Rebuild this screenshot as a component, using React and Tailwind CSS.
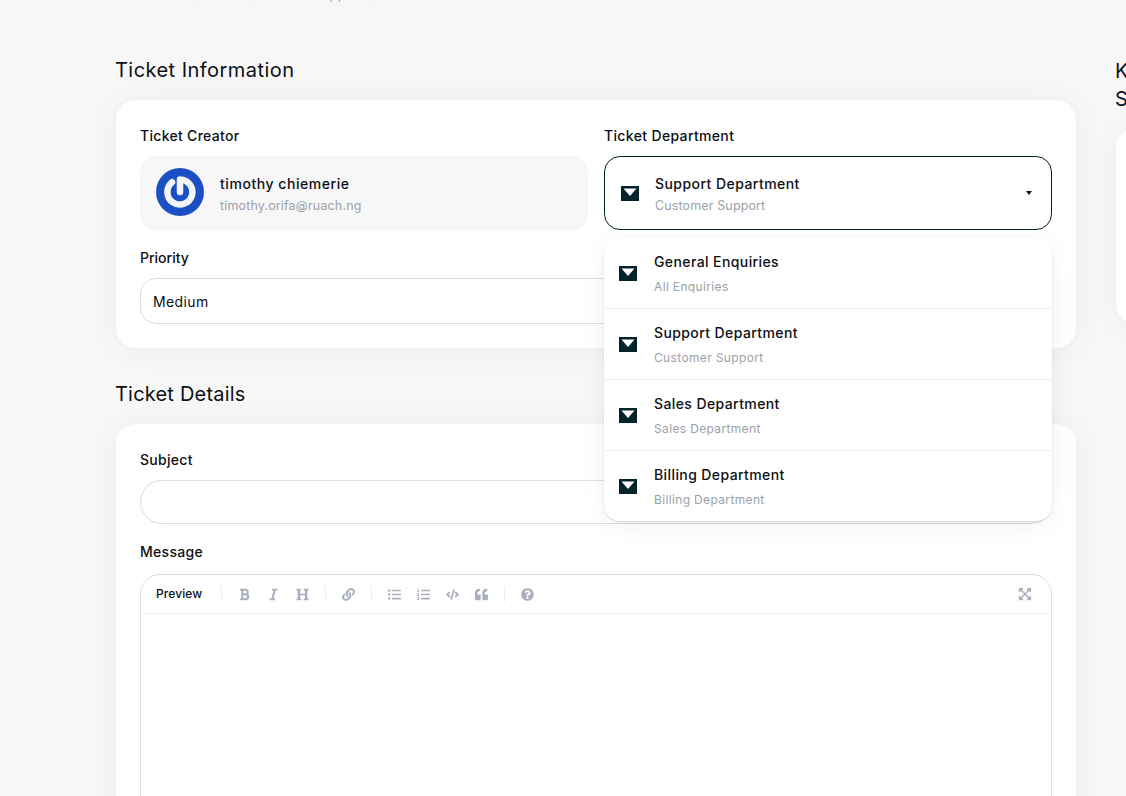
import React from "react";
import {
  FaBold,
  FaItalic,
  FaHeading,
  FaLink,
  FaListUl,
  FaListOl,
  FaCode,
  FaQuoteLeft,
  FaQuestionCircle,
  FaExpandArrowsAlt,
} from "react-icons/fa";

const departments = [
  { name: "General Enquiries", note: "All Enquiries" },
  { name: "Support Department", note: "Customer Support" },
  { name: "Sales Department", note: "Sales Department" },
  { name: "Billing Department", note: "Billing Department" },
];

const Envelope = () => (
  <svg width="18" height="15" viewBox="0 0 18 15" className="shrink-0">
    <rect width="18" height="15" fill="#04232b" />
    <path d="M2.5 2.5h13L9 10z" fill="#fff" />
  </svg>
);

const Logo = () => (
  <svg width="48" height="48" viewBox="0 0 48 48" className="shrink-0 mb-[2px]">
    <circle cx="24" cy="24" r="24" fill="#1c4fc4" />
    <path
      d="M16 14.3A12.5 12.5 0 1 0 24 11.5V24"
      fill="none"
      stroke="#f2f4f8"
      strokeWidth="6.5"
      strokeLinecap="round"
      strokeLinejoin="round"
    />
  </svg>
);

const Tool = ({ icon: Icon, size = 13 }) => (
  <span className="w-[29px] flex justify-center text-[#a9afbc]">
    <Icon size={size} />
  </span>
);

const Divider = () => <span className="w-px h-4 bg-[#eeeeee] mx-2"></span>;

const App = () => {
  return (
    <div className="h-[796px] overflow-hidden bg-[#f7f7f7] text-[#0d0f14] font-['Inter','Liberation_Sans',sans-serif] relative">
      <div className="h-[4px] overflow-hidden relative">
        <div className="absolute bottom-0 left-[116px] flex text-sm text-[#9b9fa8] whitespace-nowrap">
          <span className="w-[85px]">Dashboard /</span>
          <span className="w-[89px]">Tickets /</span>
          <span className="w-[115px] pl-[22px]">Support /</span>
          <span>New Ticket</span>
        </div>
      </div>

      <div className="flex gap-10 pl-[116px] pt-[53px]">
        <main className="w-[960px] shrink-0">
          <h2 className="text-[20px] leading-[26px] h-[43px] -ml-px tracking-[0.45px]">Ticket Information</h2>

          <section className="bg-white rounded-[20px] shadow-[0_2px_30px_rgba(0,0,0,0.05)] px-6 pt-6 h-[248px] relative">
            <div className="grid grid-cols-2 gap-4">
              <div>
                <label className="block text-[14px] leading-6 font-medium tracking-[0.3px]">Ticket Creator</label>
                <div className="mt-2 h-[74px] rounded-[16px] bg-[#f7f7f7] flex items-center gap-4 px-4">
                  <Logo />
                  <div className="pt-[4px]">
                    <p className="text-[14px] leading-5 font-medium tracking-[0.55px]">timothy chiemerie</p>
                    <p className="text-[12.5px] leading-5 mt-[2px] text-[#9b9fa8] tracking-[0.15px]">timothy.orifa@ruach.ng</p>
                  </div>
                </div>
              </div>

              <div>
                <label className="block text-[14px] leading-6 font-medium tracking-[0.35px]">Ticket Department</label>
                <div className="mt-2 h-[74px] rounded-[16px] border border-[#04232b] flex items-center px-4">
                  <Envelope />
                  <div className="ml-4 flex-1 pt-[4px]">
                    <p className="text-[14px] leading-5 font-medium tracking-[0.45px]">Support Department</p>
                    <p className="text-[12.5px] leading-5 mt-[2px] text-[#9b9fa8] tracking-[0.13px]">Customer Support</p>
                  </div>
                  <span className="w-0 h-0 border-x-[3.5px] border-x-transparent border-t-[4px] border-t-[#0d0f14] mr-[3px]"></span>
                </div>
              </div>
            </div>

            <label className="block text-[14px] leading-6 font-medium mt-4">Priority</label>
            <div className="mt-2 h-[46px] rounded-[16px] border border-[#dddddd] flex items-center px-3 text-[14px] tracking-[0.4px]">
              Medium
            </div>

            <div className="absolute left-[488px] top-[138px] w-[448px] h-[283px] z-10 bg-white rounded-[16px] shadow-[0_1px_2px_rgba(0,0,0,0.12),0_4px_24px_rgba(0,0,0,0.06)] overflow-hidden">
              {departments.map((dept, i) => (
                <div
                  key={dept.name}
                  className={`flex items-center pl-[15px] ${i < 3 ? "h-[71px] border-b border-[#eeeeee]" : "h-[70px]"}`}
                >
                  <Envelope />
                  <div className="ml-[17px]">
                    <p className="text-[14px] leading-5 font-medium tracking-[0.4px]">{dept.name}</p>
                    <p className="text-[12px] leading-4 mt-[7px] text-[#9b9fa8] tracking-[0.35px]">{dept.note}</p>
                  </div>
                </div>
              ))}
            </div>
          </section>

          <h2 className="text-[20px] leading-[26px] h-[63px] pt-[33px] box-content -mb-[20px] -ml-px tracking-[0.2px]">Ticket Details</h2>

          <section className="bg-white rounded-[20px] shadow-[0_2px_30px_rgba(0,0,0,0.05)] px-6 pt-6 h-[500px]">
            <label className="block text-[14px] leading-6 font-medium tracking-[0.3px]">Subject</label>
            <div className="mt-2 h-11 rounded-[22px] border border-[#dddddd]"></div>

            <label className="block text-[14px] leading-6 font-medium mt-4 tracking-[0.3px]">Message</label>
            <div className="mt-[10px] h-[400px] rounded-t-[20px] border border-[#dddddd]">
              <div className="h-[39px] border-b border-[#eeeeee] flex items-center pl-[15px] pr-[19px]">
                <span className="text-[12px] font-medium mr-[11px] tracking-[0.1px]">Preview</span>
                <Divider />
                <Tool icon={FaBold} />
                <Tool icon={FaItalic} />
                <Tool icon={FaHeading} />
                <Divider />
                <Tool icon={FaLink} />
                <Divider />
                <Tool icon={FaListUl} />
                <Tool icon={FaListOl} />
                <Tool icon={FaCode} />
                <Tool icon={FaQuoteLeft} />
                <Divider />
                <Tool icon={FaQuestionCircle} />
                <span className="ml-auto text-[#a9afbc]">
                  <FaExpandArrowsAlt size={14} />
                </span>
              </div>
            </div>
          </section>
        </main>

        <aside className="w-[400px] shrink-0 -ml-px">
          <h2 className="text-[20px] leading-[28px] h-[71px]">
            Knowledge Base
            <br />
            Suggestions
          </h2>
          <div className="bg-white rounded-[20px] shadow-[0_2px_30px_rgba(0,0,0,0.05)] h-[196px] ml-px"></div>
        </aside>
      </div>
    </div>
  );
};

export default App;
